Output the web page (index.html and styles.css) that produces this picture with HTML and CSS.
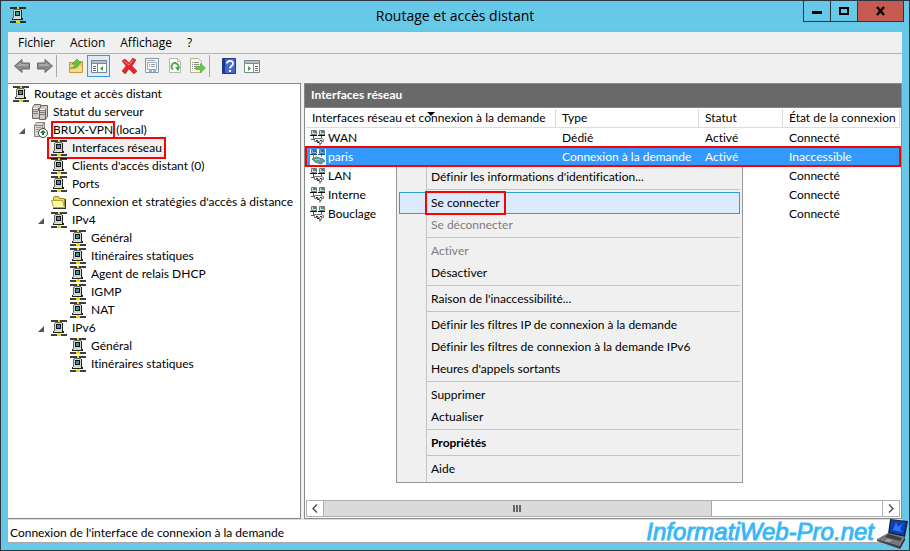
FILE: index.html
```html
<!DOCTYPE html>
<html lang="fr">
<head>
<meta charset="utf-8">
<title>Routage et accès distant</title>
<link rel="stylesheet" href="styles.css">
</head>
<body>
<svg class="defs" aria-hidden="true">
  <symbol id="net" viewBox="0 0 16 16">
    <path d="M0 1h16M0 15h6M10 15h6" stroke="#000" stroke-width="1.400"/>
    <path d="M7 0h2v3H7zM7 13h2v1H7zM6 14h4v2H6z" fill="#e8dc00"/>
    <path d="M4 2h7v1H4zM3 3h1v8H3z" fill="#666"/>
    <path d="M4 3h7v8H4z" fill="#d4d4d4"/>
    <path d="M5 4h5v5H5z" fill="#111"/><path d="M6 5h3v3H6z" fill="#28a597"/>
    <path d="M11 3h1v9h-1z" fill="#222"/>
    <path d="M3 11h8v1H3z" fill="#ddd"/><path d="M2 11h1v1H2zM2 12h11v1H2zM12 11h1v1h-1z" fill="#222"/>
  </symbol>
  <symbol id="servers" viewBox="0 0 16 16">
    <path d="M.5 3.500l2-3h6v11l-2 3h-6z" fill="#cfcac8" stroke="#6b6563"/>
    <path d="M7.500 4.500l2-3h6v11l-2 3h-6z" fill="#cfcac8" stroke="#6b6563"/>
    <path d="M1 5.500h5M1 7.500h5M1 9.500h5M8 6.500h5M8 8.500h5M8 10.500h5" stroke="#837c7a"/>
    <path d="M1 4.500h5M8 5.500h5" stroke="#fff"/>
    <path d="M13.500 5v10M6.500 4v3" stroke="#6b6563"/>
  </symbol>
  <symbol id="server" viewBox="0 0 16 16">
    <path d="M2.500 3.500l2-3h8v11l-2 3h-8z" fill="#dedad8" stroke="#857f7d"/>
    <path d="M2.500 3.500h8l2-3M10.500 4v9" fill="none" stroke="#857f7d"/>
    <path d="M4 5.500h5M4 7.500h5M4 9.500h4" stroke="#999"/>
    <circle cx="11" cy="11" r="4.500" fill="#fff" stroke="#444"/>
    <path d="M11 8l3 3h-2v2h-2v-2H8z" fill="#16821b"/>
  </symbol>
  <symbol id="folder" viewBox="0 0 16 16">
    <path d="M2.500 12.500v-9l1-1h4l1 2h5v8z" fill="#e8d85a" stroke="#a08b1c"/>
    <path d="M.5 6.500h11l2 7h-11z" fill="#fff9a8" stroke="#b8a230"/>
    <path d="M2 14.500h13" stroke="#333"/><path d="M14.500 5v9" stroke="#333"/>
  </symbol>
  <symbol id="nic" viewBox="0 0 16 16">
    <path d="M1.500.5h5v4h-5zM9.500.5h5v4h-5z" fill="#ddd" stroke="#777"/>
    <path d="M3 1h3v2H3zM11 1h3v2h-3z" fill="#16a796"/>
    <path d="M0 5.500h7M8 5.500h7" stroke="#111"/>
    <path d="M3.500 6v3M11.500 6v2M1 9.500h3" fill="none" stroke="#555"/>
    <path d="M4.500 8.500h7l2 1v2h-2v2h-2v-2h-5z" fill="#f0f0f0" stroke="#777"/>
    <path d="M6 10.500h2M10 10.500h2M7 12.500h2M10 13.500v2" stroke="#333"/>
  </symbol>
  <symbol id="nic-demand" viewBox="0 0 16 16">
    <path d="M0 0h16v16H0z" fill="#fff"/>
    <path d="M1.500.5h5v4h-5zM9.500.5h5v4h-5z" fill="#80a9d8" stroke="#4b78b0"/>
    <path d="M3 1h3v2H3zM11 1h3v2h-3z" fill="#1276b7"/>
    <path d="M0 5.500h7M8 5.500h7" stroke="#1c4c90"/>
    <path d="M3.500 6v3M11.500 6v2" stroke="#68a"/>
    <path d="M2 10l4-2 7 2 2 2-4 3-6-2z" fill="#5fa595" stroke="#5580a5"/>
    <path d="M5 10.500h5" stroke="#8fd09b"/>
  </symbol>
  <symbol id="arrow" viewBox="0 0 16 16">
    <path d="M.5 8L8 1.500V5h7.500v6H8v3.500z" fill="#8a8a8a" stroke="#6a6a6a"/>
    <path d="M3 8l4-3.500V6h7v2z" fill="#aaa"/>
  </symbol>
  <symbol id="up" viewBox="0 0 16 16">
    <path d="M1.500 4.500h6l1-1h6v11h-13z" fill="#eec46a" stroke="#c79a3e"/>
    <path d="M2 8h12v6H2z" fill="#f6d88e"/>
    <path d="M2 10c4 0 5-2 5-4H4l5-5 4 4h-2c0 4-3 6-9 5z" fill="#5cc83a" stroke="#3b9a24" stroke-width=".6"/>
  </symbol>
  <symbol id="tree-view" viewBox="0 0 16 16">
    <path d="M.5 2.500h15v12H.5z" fill="#fff" stroke="#7d8791"/>
    <path d="M1 3h14v2H1z" fill="#b4bdc6"/><path d="M1 5.500h14" stroke="#7d8791"/>
    <path d="M6.500 6v8" stroke="#7d8791"/>
    <path d="M2 8.500h3M2 10.500h3M2 12.500h3" stroke="#667"/>
    <path d="M12 8v5l-3-2.500z" fill="#35a536"/>
  </symbol>
  <symbol id="delete" viewBox="0 0 16 16">
    <path d="M1 3l3-2 4 4 4-5 3 2-4 6 5 5-3 3-5-5-4 5-3-3 4-5z" fill="#e3242b" stroke="#c9343a" stroke-width=".7"/>
    <path d="M3 3l5 4 4-5" fill="none" stroke="#f7837f"/>
  </symbol>
  <symbol id="props" viewBox="0 0 16 16">
    <path d="M1.500.5h13v14h-13z" fill="#f5f7f9" stroke="#8996a3"/>
    <path d="M3.500 4.500h9v7h-9z" fill="#fff" stroke="#9aa8b5"/>
    <path d="M3 2.500h8" stroke="#9aa8b5"/>
    <path d="M5 6.500h1M7 6.500h4M5 8.500h1M7 8.500h4" stroke="#89a"/>
    <path d="M5 13h3M9 13h3" stroke="#4aabdf" stroke-width="1.500"/>
  </symbol>
  <symbol id="refresh" viewBox="0 0 16 16">
    <path d="M2.500.5h8l3 3v11h-11z" fill="#fff" stroke="#b5b5b5"/>
    <path d="M10.500.5v3h3" fill="none" stroke="#b5b5b5"/>
    <path d="M6 11.500A3.500 3.500 0 1 1 10.500 11" fill="none" stroke="#4ab047" stroke-width="2"/>
    <path d="M8 9h5l-2 4z" fill="#3da33a"/>
  </symbol>
  <symbol id="export" viewBox="0 0 16 16">
    <path d="M.5.5h8l3 3v11H.5z" fill="#fff8dc" stroke="#b5b29c"/>
    <path d="M2 4.500h1M4 4.500h5M2 6.500h1M4 6.500h5M2 8.500h1M4 8.500h3M2 10.500h1M4 10.500h4" stroke="#888"/>
    <path d="M6 8.500h4.500V5.500L15.500 10l-5 4.500v-3H6z" fill="#63c944" stroke="#3da02a" stroke-width=".6"/>
  </symbol>
  <symbol id="help" viewBox="0 0 16 16">
    <path d="M1.500.5h13v15h-13z" fill="#4269d0" stroke="#22398c"/>
    <path d="M3 1v14" stroke="#1f3690" stroke-width="2"/>
    <path d="M6 5.500C6 2 12 2 12 5.500 12 8 9 8 9 10.500" fill="none" stroke="#fff" stroke-width="1.800"/>
    <path d="M8 12h2v2H8z" fill="#fff"/>
  </symbol>
  <symbol id="action-view" viewBox="0 0 16 16">
    <path d="M.5 2.500h15v12H.5z" fill="#fff" stroke="#7d8791"/>
    <path d="M1 3h14v2H1z" fill="#b4bdc6"/><path d="M1 5.500h14" stroke="#7d8791"/>
    <path d="M9.500 6v8" stroke="#7d8791"/>
    <path d="M11 8.500h3M11 10.500h3M11 12.500h3" stroke="#667"/>
    <path d="M4 8v5l3-2.500z" fill="#35a536"/>
  </symbol>
</svg>

<div class="window">
  <header class="titlebar">
    <svg class="icon app-icon"><use href="#net"/></svg>
    <h1>Routage et accès distant</h1>
    <div class="window-buttons">
      <button class="win-btn" aria-label="Réduire"><svg width="10" height="10"><path d="M0 5h10v3H0z"/></svg></button>
      <button class="win-btn" aria-label="Agrandir"><svg width="10" height="10"><path d="M1 2h8v6H1z" fill="none" stroke="#000" stroke-width="2"/></svg></button>
      <button class="win-btn close" aria-label="Fermer"><svg width="10" height="10"><path d="M1 1l7 8M8 1L1 9" stroke="#000" stroke-width="2.400"/></svg></button>
    </div>
  </header>

  <nav class="menubar">
    <button>Fichier</button><button>Action</button><button>Affichage</button><button>?</button>
  </nav>

  <div class="toolbar">
    <button aria-label="Précédent"><svg class="icon"><use href="#arrow"/></svg></button>
    <button aria-label="Suivant"><svg class="icon flip"><use href="#arrow"/></svg></button>
    <span class="divider"></span>
    <button aria-label="Dossier parent"><svg class="icon"><use href="#up"/></svg></button>
    <button class="pressed" aria-label="Arborescence"><svg class="icon"><use href="#tree-view"/></svg></button>
    <button class="spaced" aria-label="Supprimer"><svg class="icon"><use href="#delete"/></svg></button>
    <button aria-label="Propriétés"><svg class="icon"><use href="#props"/></svg></button>
    <button aria-label="Actualiser"><svg class="icon"><use href="#refresh"/></svg></button>
    <button aria-label="Exporter la liste"><svg class="icon"><use href="#export"/></svg></button>
    <span class="divider"></span>
    <button aria-label="Aide"><svg class="icon"><use href="#help"/></svg></button>
    <button aria-label="Volet Actions"><svg class="icon"><use href="#action-view"/></svg></button>
  </div>

  <main class="content">
    <nav class="tree">
      <div class="node"><svg class="icon"><use href="#net"/></svg>Routage et accès distant</div>
      <ul>
        <li><div class="node"><svg class="icon"><use href="#servers"/></svg>Statut du serveur</div></li>
        <li>
          <div class="node open"><svg class="icon"><use href="#server"/></svg><span><span class="mark">BRUX-VPN</span> (local)</span></div>
          <ul>
            <li><div class="node selected"><svg class="icon"><use href="#net"/></svg>Interfaces réseau</div></li>
            <li><div class="node"><svg class="icon"><use href="#net"/></svg>Clients d'accès distant (0)</div></li>
            <li><div class="node"><svg class="icon"><use href="#net"/></svg>Ports</div></li>
            <li><div class="node"><svg class="icon"><use href="#folder"/></svg>Connexion et stratégies d'accès à distance</div></li>
            <li>
              <div class="node open"><svg class="icon"><use href="#net"/></svg>IPv4</div>
              <ul>
                <li><div class="node"><svg class="icon"><use href="#net"/></svg>Général</div></li>
                <li><div class="node"><svg class="icon"><use href="#net"/></svg>Itinéraires statiques</div></li>
                <li><div class="node"><svg class="icon"><use href="#net"/></svg>Agent de relais DHCP</div></li>
                <li><div class="node"><svg class="icon"><use href="#net"/></svg>IGMP</div></li>
                <li><div class="node"><svg class="icon"><use href="#net"/></svg>NAT</div></li>
              </ul>
            </li>
            <li>
              <div class="node open"><svg class="icon"><use href="#net"/></svg>IPv6</div>
              <ul>
                <li><div class="node"><svg class="icon"><use href="#net"/></svg>Général</div></li>
                <li><div class="node"><svg class="icon"><use href="#net"/></svg>Itinéraires statiques</div></li>
              </ul>
            </li>
          </ul>
        </li>
      </ul>
    </nav>

    <section class="details">
      <h2>Interfaces réseau</h2>
      <div class="list">
        <table>
          <colgroup><col class="c-name"><col class="c-type"><col class="c-state"><col></colgroup>
          <thead>
            <tr><th class="sorted">Interfaces réseau et connexion à la demande</th><th>Type</th><th>Statut</th><th>État de la connexion</th></tr>
          </thead>
          <tbody>
            <tr><td><svg class="icon"><use href="#nic"/></svg>WAN</td><td>Dédié</td><td>Activé</td><td>Connecté</td></tr>
            <tr class="active"><td><svg class="icon"><use href="#nic-demand"/></svg>paris</td><td>Connexion à la demande</td><td>Activé</td><td>Inaccessible</td></tr>
            <tr><td><svg class="icon"><use href="#nic"/></svg>LAN</td><td></td><td></td><td>Connecté</td></tr>
            <tr><td><svg class="icon"><use href="#nic"/></svg>Interne</td><td></td><td></td><td>Connecté</td></tr>
            <tr><td><svg class="icon"><use href="#nic"/></svg>Bouclage</td><td></td><td></td><td>Connecté</td></tr>
          </tbody>
        </table>
        <div class="scrollbar">
          <button aria-label="Défiler à gauche"><svg width="6" height="9"><path d="M5 .5L1 4.500l4 4" fill="none" stroke="#555" stroke-width="1.500"/></svg></button>
          <div class="track"><div class="thumb"><i></i><i></i><i></i></div></div>
          <button aria-label="Défiler à droite"><svg width="6" height="9"><path d="M1 .5l4 4-4 4" fill="none" stroke="#555" stroke-width="1.500"/></svg></button>
        </div>
        <div class="context-menu">
          <button>Définir les informations d'identification...</button>
          <hr>
          <button class="hover"><span class="mark">Se connecter</span></button>
          <button disabled>Se déconnecter</button>
          <hr>
          <button disabled>Activer</button>
          <button>Désactiver</button>
          <hr>
          <button>Raison de l'inaccessibilité...</button>
          <hr>
          <button>Définir les filtres IP de connexion à la demande</button>
          <button>Définir les filtres de connexion à la demande IPv6</button>
          <button>Heures d'appels sortants</button>
          <hr>
          <button>Supprimer</button>
          <button>Actualiser</button>
          <hr>
          <button class="default">Propriétés</button>
          <hr>
          <button>Aide</button>
        </div>
      </div>
    </section>
  </main>

  <footer class="statusbar">Connexion de l'interface de connexion à la demande</footer>

  <div class="brand">
    <span>InformatiWeb-Pro.net</span>
    <svg width="32" height="30" viewBox="0 0 32 30">
      <path d="M13 0l18 2-3 16-17-3z" fill="#20242c"/>
      <path d="M14 1l15 2-2 13-14-3z" fill="#0b3fc0"/>
      <path d="M16 11l3-8 2 5 5-4-3 6 3 3-6-1z" fill="#3f8cff" opacity=".75"/>
      <path d="M11 14l17 4-5 9-23-7z" fill="#77797e"/>
      <path d="M11 15l14 4-2 3-15-4z" fill="#3c3e43"/>
      <path d="M0 20l23 7v3L0 22z" fill="#42444a"/>
      <path d="M28 18v3l-5 9v-3z" fill="#25272b"/>
      <path d="M10 20l5 1-2 2-5-1z" fill="#a6a8ad"/>
    </svg>
  </div>
</div>
</body>
</html>
```

FILE: styles.css
```css
* { box-sizing: border-box; }

body {
  margin: 0;
  font: 12px/18px Lato, "Open Sans", sans-serif;
  font-variant-ligatures: none;
  color: #000;
}

button {
  font: inherit;
  font-variant-ligatures: none;
  color: inherit;
  margin: 0;
  padding: 0;
  border: 0;
  background: none;
}

ul { list-style: none; margin: 0; padding: 0; }

.defs { display: none; }
.icon { width: 16px; height: 16px; flex: none; }
.flip { transform: scaleX(-1); }

.window {
  position: relative;
  display: flex;
  flex-direction: column;
  height: 100vh;
  padding: 0 7px 7px;
  background: #66c9e8;
  border: 1px solid #2c3440;
}

/* Title bar */
.titlebar {
  position: relative;
  display: flex;
  align-items: center;
  justify-content: center;
  height: 30px;
  flex: none;
}
.titlebar h1 { margin: 0; font: 14px/18px "Open Sans", sans-serif; }
.app-icon { position: absolute; left: 2px; top: 6px; }
.window-buttons {
  position: absolute;
  top: -1px;
  right: -2px;
  display: flex;
  border: 1px solid #2c3440;
}
.win-btn {
  display: flex;
  align-items: center;
  justify-content: center;
  width: 27px;
  height: 20px;
  border-right: 1px solid #2c3440;
}
.win-btn.close { width: 45px; border: 0; background: #c45a50; }

/* Menu bar and toolbar */
.menubar {
  display: flex;
  gap: 15px;
  height: 23px;
  flex: none;
  padding-left: 10px;
  font-family: "Open Sans", sans-serif;
  background: #f0f0f0;
  border-top: 1px solid #8fb4c2;
  border-bottom: 1px solid #b4b4b4;
}
.toolbar {
  display: flex;
  align-items: center;
  height: 29px;
  flex: none;
  padding: 0 0 5px 2px;
  background: #f0f0f0;
}
.toolbar button {
  display: flex;
  align-items: center;
  justify-content: center;
  width: 23px;
  height: 22px;
}
.toolbar .pressed { border: 1px solid #3c9ad8; background: #dcebfa; }
.toolbar .spaced { margin-left: 7px; }
.divider { width: 1px; height: 22px; margin-right: 7px; background: #a8a8a8; }

/* Panes */
.content {
  display: flex;
  flex: 1;
  min-height: 0;
  gap: 3px;
  background: #f0f0f0;
}
.tree {
  width: 293px;
  flex: none;
  padding: 1px 0 0 5px;
  overflow: hidden;
  background: #fff;
  border: 1px solid #888;
  border-left: 0;
  white-space: nowrap;
}
.tree ul { padding-left: 19px; }
.node {
  position: relative;
  display: flex;
  align-items: center;
  gap: 5px;
  width: max-content;
  height: 18px;
}
.node.open::before {
  content: "";
  position: absolute;
  left: -13px;
  top: 7px;
  border: 3px solid transparent;
  border-right-color: #555;
  border-bottom-color: #555;
}
.node.selected {
  margin-left: -2px;
  padding: 0 2px;
  background: #f0f0f0;
  outline: 2px solid #f00;
}
.mark { outline: 2px solid #f00; }
.node .mark { display: inline-block; line-height: 14px; }

.details {
  display: flex;
  flex-direction: column;
  flex: 1;
  min-width: 0;
  border: 1px solid #888;
}
.details h2 {
  margin: 0;
  padding: 2px 6px 3px;
  font-size: 12px;
  font-weight: 700;
  line-height: 18px;
  color: #fff;
  background: #696969;
}
.list {
  position: relative;
  display: flex;
  flex-direction: column;
  justify-content: space-between;
  flex: 1;
  padding: 1px;
  background: #fff;
  border-top: 1px solid #888;
}

table { width: 100%; table-layout: fixed; border-collapse: separate; border-spacing: 0; }
.c-name { width: 250px; }
.c-type { width: 143px; }
.c-state { width: 84px; }
th, td {
  height: 19px;
  padding: 0 0 0 6px;
  line-height: 18px;
  text-align: left;
  font-weight: 400;
  white-space: nowrap;
}
th { position: relative; border-right: 1px solid #dcdcdc; border-bottom: 1px solid #dcdcdc; }
.sorted::after {
  content: "";
  position: absolute;
  left: 121px;
  top: 3px;
  border: 4px solid transparent;
  border-top-color: #000;
  border-bottom: 0;
}
td .icon { margin-right: 2px; vertical-align: middle; }
td:first-child { padding-left: 4px; }
.active { position: relative; z-index: 2; outline: 2px solid #f00; outline-offset: -1px; }
.active td { color: #fff; background: #3399ff; }

.scrollbar { display: flex; height: 17px; border: 1px solid #b0b0b0; }
.scrollbar button {
  display: flex;
  align-items: center;
  justify-content: center;
  width: 16px;
}
.track { flex: 1; border: solid #b0b0b0; border-width: 0 1px; }
.thumb {
  display: flex;
  align-items: center;
  justify-content: center;
  gap: 1px;
  width: calc(70% - 3px);
  height: 15px;
  background: #dadada;
  border-right: 1px solid #a8a8a8;
}
.thumb i { width: 2px; height: 7px; background: #666; }

/* Context menu */
.context-menu {
  position: absolute;
  z-index: 1;
  left: 91px;
  top: 55px;
  width: 347px;
  padding: 2px;
  background: linear-gradient(#c4c4c4, #c4c4c4) 29px 0 / 1px 100% no-repeat #f0f0f0;
  border: 1px solid #979797;
}
.context-menu button {
  display: flex;
  align-items: center;
  width: 100%;
  height: 22px;
  padding-left: 32px;
}
.context-menu hr { height: 1px; margin: 1px 0 2px 28px; border: 0; background: #c4c4c4; }
.context-menu button:disabled { color: #7d7d7d; }
.context-menu .hover { padding-left: 27px; background: #dcebfc; border: 1px solid #2f9fd8; }
.context-menu .mark { padding: 1px 4px; }
.context-menu .default { font-weight: 700; }

/* Status bar */
.statusbar {
  height: 24px;
  flex: none;
  padding: 4px 2px 0;
  background: #fff;
  border-top: 1px solid #ddd;
  border-bottom: 1px solid #a8a8a8;
}
.brand {
  position: absolute;
  right: 0;
  bottom: -1px;
  z-index: 3;
  display: flex;
  align-items: center;
  gap: 3px;
  font: italic 400 24px/30px "Liberation Sans", sans-serif;
  color: #36aef4;
}
.brand span { padding-bottom: 4px; -webkit-text-stroke: 1px #3fbcf8; }
```
